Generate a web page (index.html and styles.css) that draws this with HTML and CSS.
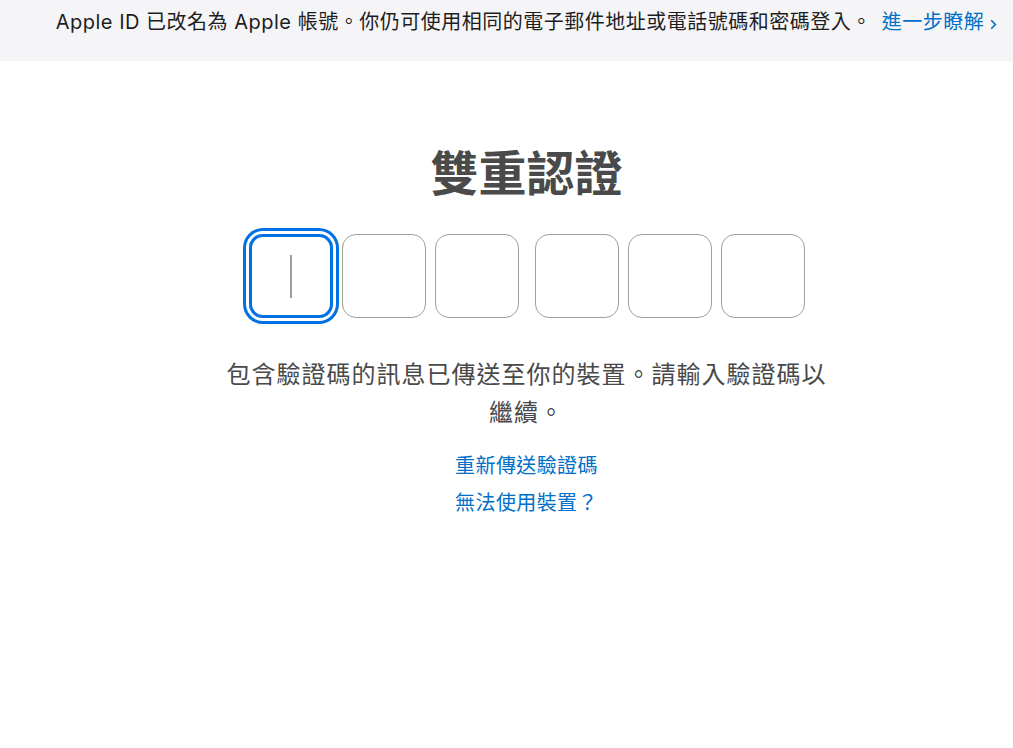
FILE: index.html
```html
<!DOCTYPE html>
<html lang="zh-Hant">
<head>
  <meta charset="UTF-8" />
  <meta name="viewport" content="width=device-width, initial-scale=1.0"/>
  <title>雙重認證</title>
  <link rel="stylesheet" href="styles.css">
</head>
<body>
  <div class="banner">
    <p class="banner-text">Apple ID 已改名為 Apple 帳號。你仍可使用相同的電子郵件地址或電話號碼和密碼登入。 <a href="#" class="banner-link">進一步瞭解<svg class="chevron" width="7" height="11" viewBox="0 0 7 11"><path d="M1.2 1.2 L5.4 5.5 L1.2 9.8" fill="none" stroke="currentColor" stroke-width="1.6"/></svg></a></p>
  </div>

  <main class="content">
    <h1 class="title">雙重認證</h1>

    <div class="code-fields">
      <div class="code-group">
        <div class="code-box focused"><span class="caret"></span></div>
        <div class="code-box"></div>
        <div class="code-box"></div>
      </div>
      <div class="code-group">
        <div class="code-box"></div>
        <div class="code-box"></div>
        <div class="code-box"></div>
      </div>
    </div>

    <p class="hint">包含驗證碼的訊息已傳送至你的裝置。請輸入驗證碼以繼續。</p>

    <div class="actions">
      <a href="#">重新傳送驗證碼</a>
      <a href="#">無法使用裝置？</a>
    </div>
  </main>
</body>
</html>
```

FILE: styles.css
```css
body {
  margin: 0;
  padding: 0;
  background: #fff;
  font-family: "Inter", "Noto Sans CJK TC", sans-serif;
  color: #1d1d1f;
}
a {
  color: #0070c9;
  text-decoration: none;
}
.banner {
  background: #f5f5f7;
  height: 61px;
  box-sizing: border-box;
  padding: 9px 0 0 40px;
  text-align: center;
}
.banner-text {
  margin: 0;
  font-size: 20px;
  line-height: 26px;
  letter-spacing: 0.5px;
  white-space: nowrap;
}
.banner-link {
  margin-left: 4px;
}
.chevron {
  margin-left: 6px;
  vertical-align: -1px;
}
.content {
  padding: 86px 0 0 40px;
  text-align: center;
}
.title {
  margin: 0;
  font-size: 48px;
  line-height: 53px;
  font-weight: 700;
  color: #4a4a4a;
}
.code-fields {
  display: flex;
  justify-content: center;
  gap: 16px;
  margin-top: 34px;
}
.code-group {
  display: flex;
  gap: 9px;
}
.code-box {
  width: 84px;
  height: 84px;
  box-sizing: border-box;
  border: 1px solid #9e9e9e;
  border-radius: 14px;
  display: flex;
  align-items: center;
  justify-content: center;
}
.code-box.focused {
  border: 3px solid #0071e3;
  box-shadow: 0 0 0 3px #fff, 0 0 0 6px #0071e3;
}
.caret {
  width: 2px;
  height: 43px;
  background: #a0a0a0;
}
.hint {
  max-width: 610px;
  margin: 38px auto 0;
  font-size: 24px;
  line-height: 38px;
  letter-spacing: 1px;
  color: #494949;
}
.actions {
  margin-top: 16px;
  display: flex;
  flex-direction: column;
  align-items: center;
}
.actions a {
  font-size: 20px;
  line-height: 37px;
  letter-spacing: 0.4px;
}
```
